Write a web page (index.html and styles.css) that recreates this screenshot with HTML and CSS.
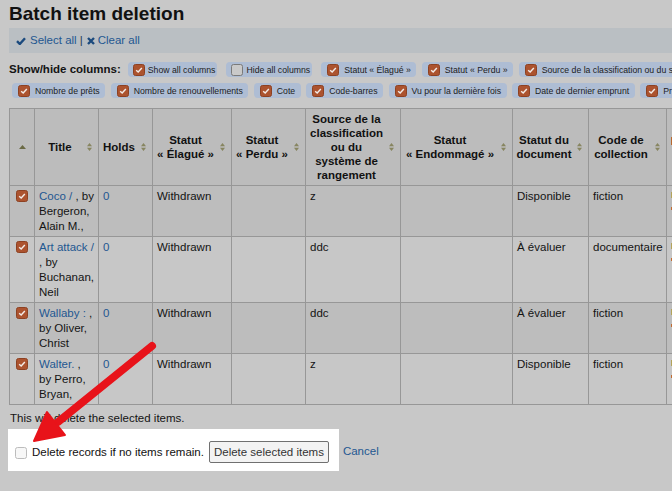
FILE: index.html
```html
<!DOCTYPE html>
<html lang="fr">
<head>
<meta charset="utf-8">
<title>Batch item deletion</title>
<link rel="stylesheet" href="styles.css">
</head>
<body>
<div class="page">
  <h1 class="title">Batch item deletion</h1>

  <div class="toolbar">
    <a class="tb-link" href="#"><svg class="ico-check" viewBox="0 0 10 8" width="10" height="8"><path d="M1 4.2 L3.8 7 L9 1.2"/></svg>Select all</a>
    <span class="sep">|</span>
    <a class="tb-link" href="#"><svg class="ico-x" viewBox="0 0 8 8" width="8" height="8"><path d="M1 1 L7 7 M7 1 L1 7"/></svg>Clear all</a>
  </div>

  <div class="colsel">
    <div class="colsel-row">
      <span class="colsel-label">Show/hide columns:</span>
      <span class="pill pill-ctl"><span class="cb"><svg viewBox="0 0 12 12"><path d="M2.6 6.2 L5 8.5 L9.4 3.5"/></svg></span>Show all columns</span>
      <span class="pill pill-ctl"><span class="cb cb-off"></span>Hide all columns</span>
      <span class="pill"><span class="cb"><svg viewBox="0 0 12 12"><path d="M2.6 6.2 L5 8.5 L9.4 3.5"/></svg></span>Statut « Élagué »</span>
      <span class="pill"><span class="cb"><svg viewBox="0 0 12 12"><path d="M2.6 6.2 L5 8.5 L9.4 3.5"/></svg></span>Statut « Perdu »</span>
      <span class="pill"><span class="cb"><svg viewBox="0 0 12 12"><path d="M2.6 6.2 L5 8.5 L9.4 3.5"/></svg></span>Source de la classification ou du système de rangement</span>
    </div>
    <div class="colsel-row colsel-row2">
      <span class="pill"><span class="cb"><svg viewBox="0 0 12 12"><path d="M2.6 6.2 L5 8.5 L9.4 3.5"/></svg></span>Nombre de prêts</span>
      <span class="pill"><span class="cb"><svg viewBox="0 0 12 12"><path d="M2.6 6.2 L5 8.5 L9.4 3.5"/></svg></span>Nombre de renouvellements</span>
      <span class="pill"><span class="cb"><svg viewBox="0 0 12 12"><path d="M2.6 6.2 L5 8.5 L9.4 3.5"/></svg></span>Cote</span>
      <span class="pill"><span class="cb"><svg viewBox="0 0 12 12"><path d="M2.6 6.2 L5 8.5 L9.4 3.5"/></svg></span>Code-barres</span>
      <span class="pill"><span class="cb"><svg viewBox="0 0 12 12"><path d="M2.6 6.2 L5 8.5 L9.4 3.5"/></svg></span>Vu pour la dernière fois</span>
      <span class="pill"><span class="cb"><svg viewBox="0 0 12 12"><path d="M2.6 6.2 L5 8.5 L9.4 3.5"/></svg></span>Date de dernier emprunt</span>
      <span class="pill"><span class="cb"><svg viewBox="0 0 12 12"><path d="M2.6 6.2 L5 8.5 L9.4 3.5"/></svg></span>Prix</span>
    </div>
  </div>

  <table class="items">
    <colgroup>
      <col class="c-sel"><col class="c-title"><col class="c-holds"><col class="c-elag"><col class="c-perdu"><col class="c-src"><col class="c-endo"><col class="c-doc"><col class="c-coll"><col class="c-more">
    </colgroup>
    <thead>
      <tr>
        <th class="th-sel"><svg class="ico-asc" viewBox="0 0 7 4" width="7" height="4"><path d="M0 4 L3.5 0 L7 4 Z"/></svg></th>
        <th>Title<svg class="ico-sort" viewBox="0 0 5 8" width="5" height="8"><path d="M0 3.2 L2.5 0 L5 3.2 Z M0 4.8 L2.5 8 L5 4.8 Z"/></svg></th>
        <th>Holds<svg class="ico-sort" viewBox="0 0 5 8" width="5" height="8"><path d="M0 3.2 L2.5 0 L5 3.2 Z M0 4.8 L2.5 8 L5 4.8 Z"/></svg></th>
        <th>Statut «&nbsp;Élagué&nbsp;»<svg class="ico-sort" viewBox="0 0 5 8" width="5" height="8"><path d="M0 3.2 L2.5 0 L5 3.2 Z M0 4.8 L2.5 8 L5 4.8 Z"/></svg></th>
        <th>Statut «&nbsp;Perdu&nbsp;»<svg class="ico-sort" viewBox="0 0 5 8" width="5" height="8"><path d="M0 3.2 L2.5 0 L5 3.2 Z M0 4.8 L2.5 8 L5 4.8 Z"/></svg></th>
        <th>Source de la classification ou du système de rangement<svg class="ico-sort" viewBox="0 0 5 8" width="5" height="8"><path d="M0 3.2 L2.5 0 L5 3.2 Z M0 4.8 L2.5 8 L5 4.8 Z"/></svg></th>
        <th>Statut «&nbsp;Endommagé&nbsp;»<svg class="ico-sort" viewBox="0 0 5 8" width="5" height="8"><path d="M0 3.2 L2.5 0 L5 3.2 Z M0 4.8 L2.5 8 L5 4.8 Z"/></svg></th>
        <th>Statut du document<svg class="ico-sort" viewBox="0 0 5 8" width="5" height="8"><path d="M0 3.2 L2.5 0 L5 3.2 Z M0 4.8 L2.5 8 L5 4.8 Z"/></svg></th>
        <th>Code de collection<svg class="ico-sort" viewBox="0 0 5 8" width="5" height="8"><path d="M0 3.2 L2.5 0 L5 3.2 Z M0 4.8 L2.5 8 L5 4.8 Z"/></svg></th>
        <th class="th-more"><span class="hmark"></span><br>&nbsp;</th>
      </tr>
    </thead>
    <tbody>
      <tr class="odd">
        <td class="td-sel"><span class="cb"><svg viewBox="0 0 12 12"><path d="M2.6 6.2 L5 8.5 L9.4 3.5"/></svg></span></td>
        <td><a href="#">Coco /</a> , by Bergeron, Alain M.,</td>
        <td><a href="#">0</a></td>
        <td>Withdrawn</td>
        <td></td>
        <td>z</td>
        <td></td>
        <td>Disponible</td>
        <td>fiction</td>
        <td><span class="m1"></span><span class="m2"></span></td>
      </tr>
      <tr class="even">
        <td class="td-sel"><span class="cb"><svg viewBox="0 0 12 12"><path d="M2.6 6.2 L5 8.5 L9.4 3.5"/></svg></span></td>
        <td><a href="#">Art attack /</a> , by Buchanan, Neil</td>
        <td><a href="#">0</a></td>
        <td>Withdrawn</td>
        <td></td>
        <td>ddc</td>
        <td></td>
        <td>À évaluer</td>
        <td>documentaire</td>
        <td><span class="m1"></span><span class="m2"></span></td>
      </tr>
      <tr class="odd">
        <td class="td-sel"><span class="cb"><svg viewBox="0 0 12 12"><path d="M2.6 6.2 L5 8.5 L9.4 3.5"/></svg></span></td>
        <td><a href="#">Wallaby :</a> , by Oliver, Christ</td>
        <td><a href="#">0</a></td>
        <td>Withdrawn</td>
        <td></td>
        <td>ddc</td>
        <td></td>
        <td>À évaluer</td>
        <td>fiction</td>
        <td><span class="m1"></span><span class="m2"></span></td>
      </tr>
      <tr class="even">
        <td class="td-sel"><span class="cb"><svg viewBox="0 0 12 12"><path d="M2.6 6.2 L5 8.5 L9.4 3.5"/></svg></span></td>
        <td><a href="#">Walter.</a> , by Perro, Bryan,</td>
        <td><a href="#">0</a></td>
        <td>Withdrawn</td>
        <td></td>
        <td>z</td>
        <td></td>
        <td>Disponible</td>
        <td>fiction</td>
        <td><span class="m1"></span><span class="m2"></span></td>
      </tr>
    </tbody>
  </table>

  <p class="note">This will delete the selected items.</p>

  <div class="actions">
    <div class="highlight">
      <span class="cb-empty"></span>
      <label class="del-label">Delete records if no items remain.</label>
      <button class="btn" type="button">Delete selected items</button>
    </div>
    <a class="cancel" href="#">Cancel</a>
  </div>
</div>

<svg class="arrow" viewBox="0 0 672 491" width="672" height="491">
  <line x1="152" y1="346" x2="58" y2="422" stroke="#e8131a" stroke-width="8" stroke-linecap="round"/>
  <polygon points="34,441 65,435 47,412" fill="#e8131a" stroke="#e8131a" stroke-width="2" stroke-linejoin="round"/>
</svg>
</body>
</html>
```

FILE: styles.css
```css
html, body {
  margin: 0;
  padding: 0;
  overflow: hidden;
}

body {
  width: 672px;
  height: 491px;
  position: relative;
  background: #c8c8c8;
  font-family: "Liberation Sans", Arial, sans-serif;
  font-size: 11.5px;
  color: #141414;
}

a {
  color: #1f5791;
  text-decoration: none;
}

.page {
  padding: 3px 0 0 9px;
}

.title {
  margin: 0;
  font-size: 19px;
  line-height: 22px;
  font-weight: bold;
  color: #111;
}

/* toolbar */
.toolbar {
  margin-top: 3px;
  height: 15px;
  padding: 5px 7px;
  line-height: 15px;
  background: #babfc3;
  display: flex;
  align-items: center;
  white-space: nowrap;
}

.tb-link {
  display: inline-flex;
  align-items: center;
}

.ico-check {
  margin-right: 4px;
  fill: none;
  stroke: #1b4a7e;
  stroke-width: 2.4;
}

.ico-x {
  margin-right: 3px;
  fill: none;
  stroke: #1b4a7e;
  stroke-width: 2.4;
}

.sep {
  margin: 0 4px 0 3px;
  color: #243a55;
}

/* column selector */
.colsel {
  margin-top: 9px;
}

.colsel-row {
  display: flex;
  align-items: center;
  flex-wrap: nowrap;
  white-space: nowrap;
  height: 15px;
}

.colsel-row2 {
  margin-top: 6px;
  padding-left: 3px;
}

.colsel-label {
  font-weight: bold;
  line-height: 15px;
  margin-right: 7px;
  flex-shrink: 0;
}

.pill {
  flex-shrink: 0;
  display: inline-flex;
  align-items: center;
  height: 15px;
  padding: 0 5.5px 0 6px;
  margin-right: 5.5px;
  border-radius: 4px;
  background: #aebdd4;
  font-size: 8.7px;
  color: #1c1c1c;
}

.pill .cb {
  margin-right: 5px;
}

.pill-ctl {
  padding: 0 2px 0 5px;
  margin-right: 9px;
}

.pill-ctl .cb {
  margin-right: 3px;
}

/* checkbox */
.cb {
  box-sizing: border-box;
  display: inline-block;
  width: 12px;
  height: 12px;
  border-radius: 2.5px;
  background: #ac532f;
  border: 1px solid #8d4122;
  flex-shrink: 0;
}

.cb svg {
  display: block;
  width: 10px;
  height: 10px;
  fill: none;
  stroke: #f3ece8;
  stroke-width: 1.7;
}

.cb-off {
  background: #c9c9c9;
  border-color: #7a7a7a;
}

/* table */
.items {
  margin-top: 10px;
  border-collapse: collapse;
  table-layout: fixed;
  width: 747px;
}

.c-sel { width: 25px; }
.c-title { width: 64px; }
.c-holds { width: 54px; }
.c-elag { width: 79px; }
.c-perdu { width: 74px; }
.c-src { width: 95px; }
.c-endo { width: 112px; }
.c-doc { width: 76px; }
.c-coll { width: 78px; }
.c-more { width: 90px; }

.items th,
.items td {
  border: 1px solid #979797;
}

.items th {
  position: relative;
  background: #bcbcbc;
  font-weight: bold;
  line-height: 14px;
  padding: 3px 16px 3px 3px;
  text-align: center;
  vertical-align: middle;
  color: #111;
}

.items th.th-sel {
  padding: 0;
}

.items th.th-more {
  padding: 3px 3px 3px 4px;
  text-align: left;
}

.hmark {
  display: inline-block;
  width: 5px;
  height: 8px;
  background: #b8682f;
  vertical-align: middle;
}

.ico-sort {
  position: absolute;
  right: 6px;
  top: 50%;
  margin-top: -4px;
  fill: #878560;
}

.ico-asc {
  display: block;
  margin: 0 auto;
  fill: #6b6a45;
}

.items td {
  padding: 3px 2px 2px 4px;
  line-height: 15px;
  vertical-align: top;
  overflow: hidden;
}

.items tr.odd td {
  background: #bdbdbd;
}

.items tr.even td {
  background: #c7c7c7;
}

.items td.td-sel {
  padding: 4px 0 0 0;
  text-align: center;
}

.td-sel .cb {
  vertical-align: top;
}

.m1 {
  display: block;
  width: 4px;
  height: 6px;
  margin-top: 3px;
  background: #b3a35a;
}

.m2 {
  display: block;
  width: 3px;
  height: 3px;
  margin-top: 9px;
  background: #c06a30;
}

/* footer */
.note {
  margin: 6px 0 0 1px;
  line-height: 15px;
}

.actions {
  margin-top: 3px;
  margin-left: -1px;
  display: flex;
  align-items: flex-start;
}

.highlight {
  display: flex;
  align-items: center;
  background: #ffffff;
  padding: 12px 10px 8px 7px;
}

.cb-empty {
  box-sizing: border-box;
  display: inline-block;
  width: 12px;
  height: 12px;
  margin-top: 1px;
  border-radius: 2.5px;
  background: #f7f7f7;
  border: 1px solid #bcbcbc;
}

.del-label {
  margin-left: 5px;
  color: #111;
  line-height: 15px;
}

.btn {
  margin-left: 5px;
  height: 22px;
  padding: 0 4px;
  border: 1px solid #707070;
  border-radius: 2px;
  background: #f3f3f3;
  color: #333;
  font-family: "Liberation Sans", Arial, sans-serif;
  font-size: 11.5px;
}

.cancel {
  margin-left: 4px;
  margin-top: 15px;
  line-height: 15px;
}

/* annotation arrow over the page */
.arrow {
  position: absolute;
  left: 0;
  top: 0;
  pointer-events: none;
}
```
